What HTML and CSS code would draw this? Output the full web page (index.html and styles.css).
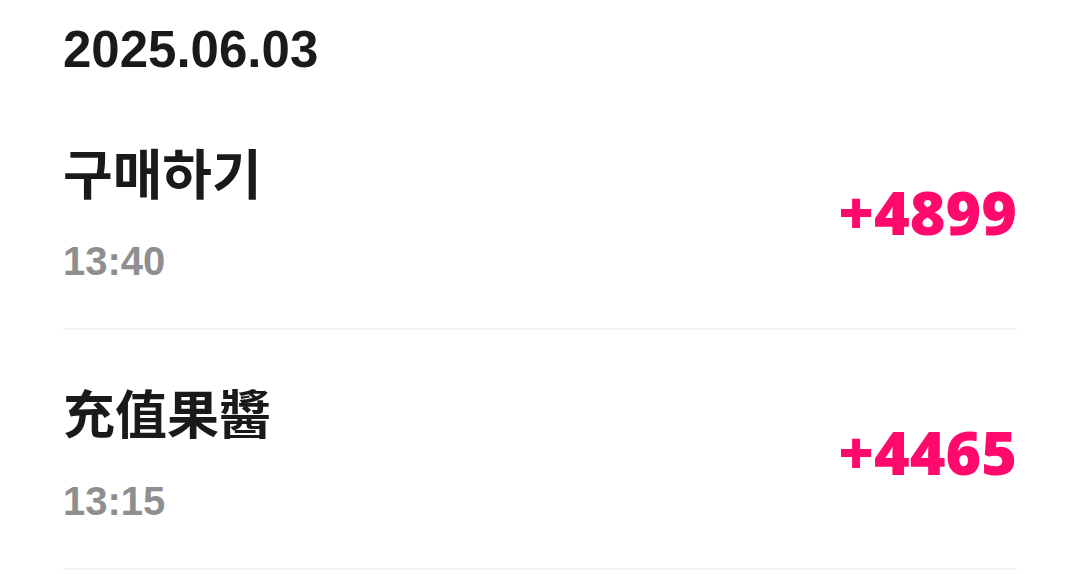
FILE: index.html
```html
<!DOCTYPE html>
<html lang="ko">

    <head>
        <meta charset="UTF-8">
        <meta name="viewport" content="width=device-width, initial-scale=1.0">
        <title>포인트 내역</title>
        <link rel="stylesheet" href="styles.css">
    </head>

    <body>
        <div class="history">
            <h2 class="date">2025.06.03</h2>
            <ul class="list">
                <li class="item">
                    <div class="info">
                        <p class="title" lang="ko">구매하기</p>
                        <p class="time">13:40</p>
                    </div>
                    <span class="amount">+4899</span>
                </li>
                <li class="item">
                    <div class="info">
                        <p class="title" lang="zh-Hant">充值果醬</p>
                        <p class="time">13:15</p>
                    </div>
                    <span class="amount">+4465</span>
                </li>
            </ul>
        </div>
    </body>

</html>
```

FILE: styles.css
```css
* {
    margin: 0;
    padding: 0;
    box-sizing: border-box;
}

body {
    background-color: #ffffff;
    font-family: 'Liberation Sans', 'Noto Sans CJK KR', sans-serif;
    color: #1a1a1a;
}

.history {
    padding: 20px 62px 0 63px;
}

.date {
    font-size: 51px;
    line-height: 60px;
    font-weight: 700;
    color: #1a1a1a;
    margin-bottom: 10px;
}

.list {
    list-style: none;
}

.item {
    display: flex;
    justify-content: space-between;
    align-items: center;
    height: 240px;
    border-bottom: 2px solid #f2f2f2;
}

.info {
    align-self: flex-start;
    padding-top: 50px;
}

.title {
    font-family: 'Noto Sans CJK KR', sans-serif;
    font-size: 54px;
    line-height: 64px;
    font-weight: 700;
    color: #1a1a1a;
    margin-bottom: 33px;
}

.title:lang(zh-Hant) {
    font-family: 'Noto Sans CJK TC', sans-serif;
    font-size: 52px;
}

.time {
    font-size: 40px;
    line-height: 48px;
    font-weight: 700;
    color: #8f8f8f;
}

.amount {
    font-family: 'Open Sans', sans-serif;
    font-size: 61px;
    font-weight: 800;
    color: #ff0a6c;
    margin-top: 4px;
}
```
